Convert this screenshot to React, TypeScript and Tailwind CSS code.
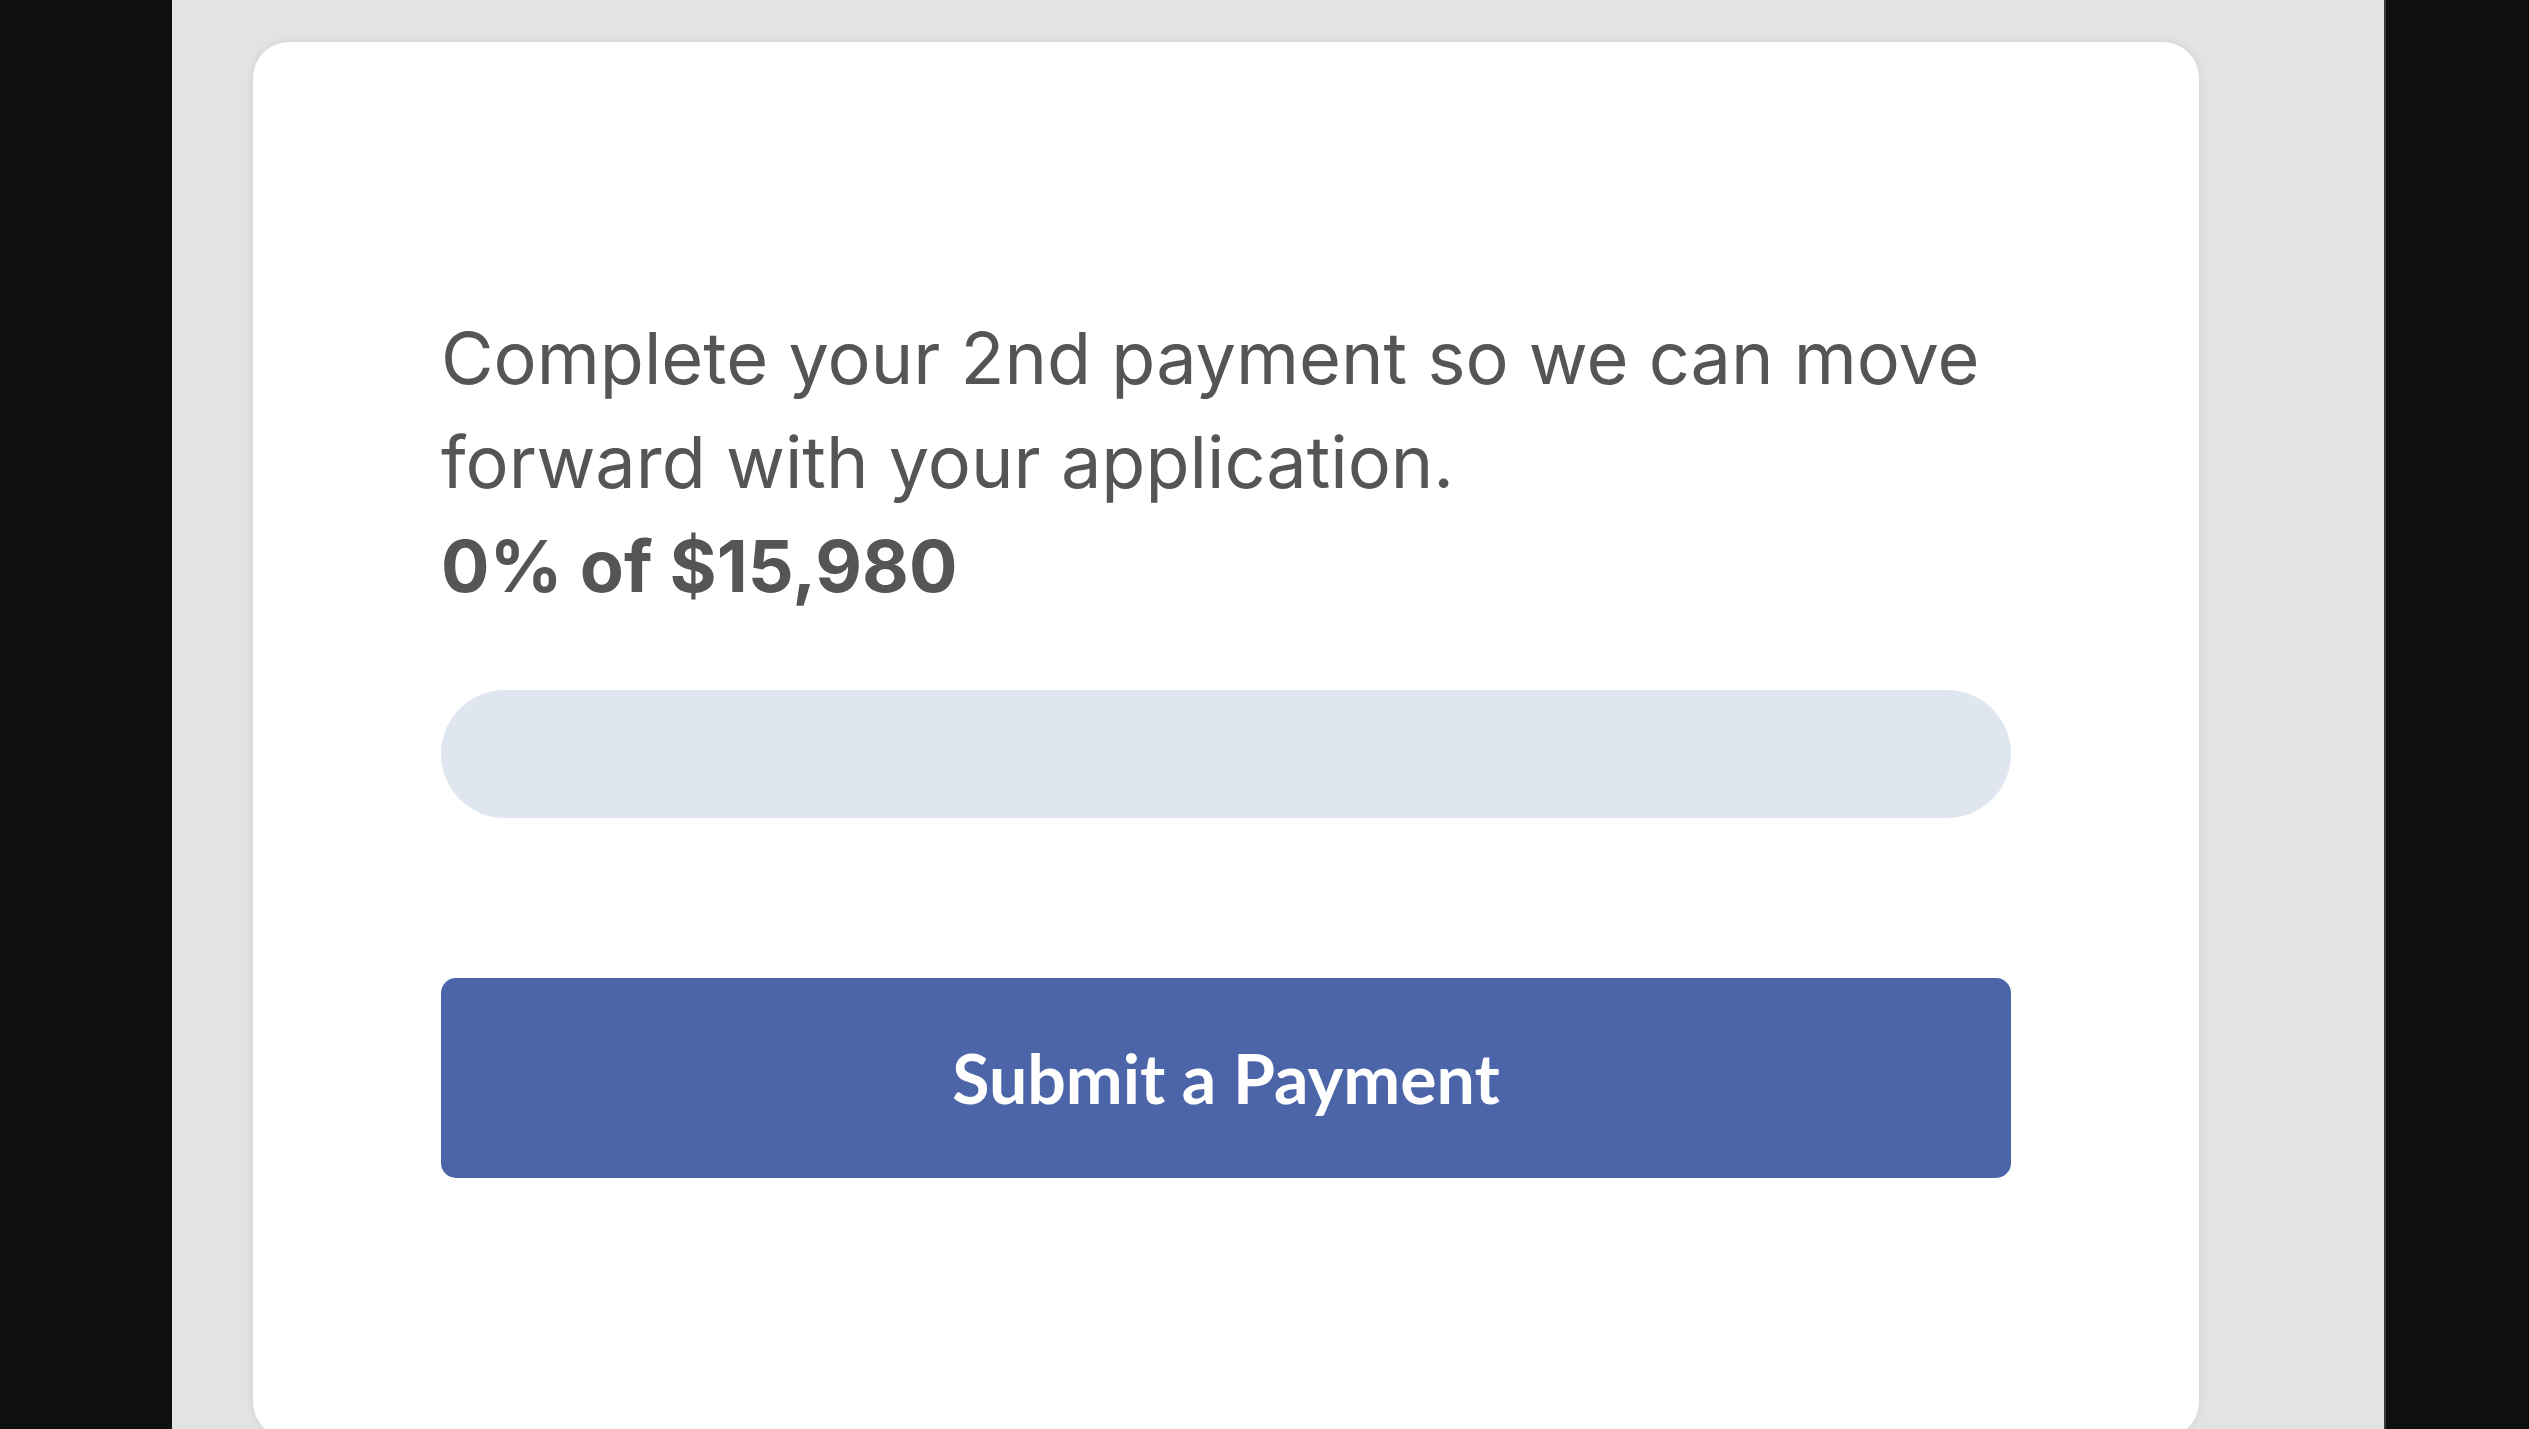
import React from 'react';

const PaymentCard: React.FC = () => {
  const paid = 0;
  const total = 15980;
  const percent = Math.round((paid / total) * 100);

  return (
    <div className="w-[1946px] h-[1396px] shrink-0 bg-white rounded-[36px] shadow-[0_0_10px_rgba(0,0,0,0.08)] px-[188px] pt-[264px]">
      <p className="text-[72px] leading-[104px] text-[#555555] font-['Inter',sans-serif]">
        Complete your 2nd payment so we can move forward with your application.
        <br />
        <span className="font-bold">
          {percent}% of ${total.toLocaleString('en-US')}
        </span>
      </p>

      {/* progress */}
      <div className="mt-[72px] h-[128px] w-full rounded-full bg-[#e0e6f0] overflow-hidden">
        <div className="h-full rounded-full bg-[#4b65a8]" style={{ width: `${percent}%` }} />
      </div>

      <button className="mt-[160px] h-[200px] w-full rounded-[15px] bg-[#4b65a8] text-white text-[68px] font-bold font-['Lato',sans-serif]">
        Submit a Payment
      </button>
    </div>
  );
};

export default function App() {
  return (
    <div className="h-screen w-full flex bg-[#0f0f0f] overflow-hidden">
      <div className="ml-[172px] w-[2214px] h-full bg-[#e3e3e3] pl-[81px] pt-[42px] border-r-2 border-[#3a3a3a]">
        <PaymentCard />
      </div>
    </div>
  );
}
